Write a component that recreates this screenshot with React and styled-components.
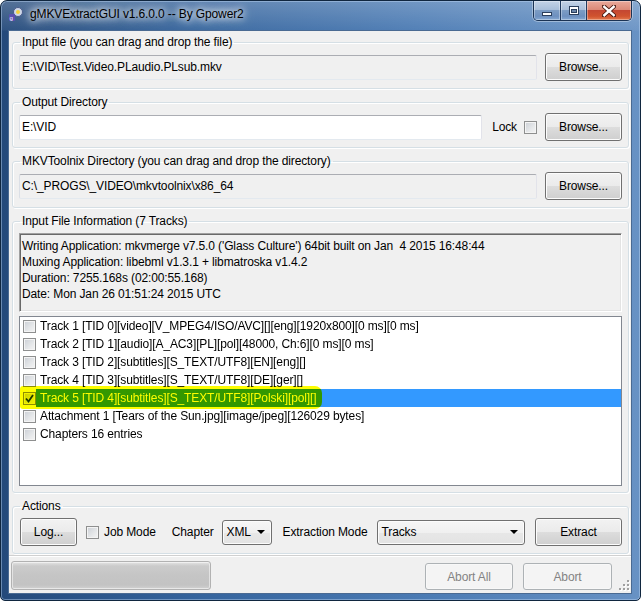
import React from "react";
import styled, { createGlobalStyle, css } from "styled-components";

const GlobalStyle = createGlobalStyle`
  html, body { margin: 0; padding: 0; background: #ffffff; }
  body { font-family: "Liberation Sans", Arial, sans-serif; font-size: 12px; color: #000; letter-spacing: -0.12px; }
  * { box-sizing: border-box; }
`;

const Window = styled.div`
  width: 641px;
  height: 601px;
  display: flex;
  flex-direction: column;
  border: 1px solid #10263f;
  border-radius: 7px 7px 5px 5px;
  padding: 0 8px 6px 7px;
  overflow: hidden;
  background:
    linear-gradient(180deg, rgba(255,255,255,0.22) 0px, rgba(255,255,255,0.05) 29px, rgba(255,255,255,0) 30px),
    linear-gradient(90deg, #24497a 0%, #34639c 30%, #4a7ab3 65%, #6892c4 100%);
  box-shadow: inset 0 0 0 1px rgba(190, 215, 245, 0.45);
`;

const TitleBar = styled.div`
  height: 29px;
  display: flex;
  align-items: flex-start;
  flex-shrink: 0;
`;

const AppIcon = styled.svg`
  width: 16px;
  height: 16px;
  margin-top: 5px;
  flex-shrink: 0;
`;

const Title = styled.div`
  margin: 5px 0 0 6px;
  line-height: 16px;
  font-size: 12px;
  color: #000;
  text-shadow: 0 0 6px #fff, 0 0 10px rgba(255,255,255,0.9), 0 0 14px rgba(255,255,255,0.7);
  white-space: nowrap;
`;

const CaptionGroup = styled.div`
  margin-left: auto;
  display: flex;
  height: 20px;
  border: 1px solid #1b3354;
  border-top: none;
  border-radius: 0 0 5px 5px;
  overflow: hidden;
  box-shadow: 0 0 0 1px rgba(255,255,255,0.35);
`;

const CaptionButton = styled.div`
  width: ${(p) => (p.$close ? 45 : 26)}px;
  height: 19px;
  display: flex;
  align-items: center;
  justify-content: center;
  border-left: ${(p) => (p.$first ? "none" : "1px solid #203a5e")};
  box-shadow: inset 0 0 0 1px rgba(255,255,255,0.35);
  ${(p) =>
    p.$close
      ? css`
          background: linear-gradient(180deg, #e9a99b 0%, #dc8a78 45%, #c44732 50%, #d0532f 80%, #e37a4f 100%);
        `
      : css`
          background: linear-gradient(180deg, #c3d3e7 0%, #a9bfda 45%, #7c9cc4 50%, #6d90bf 80%, #86a9d3 100%);
        `}
`;

const Client = styled.div`
  flex: 1;
  display: flex;
  flex-direction: column;
  background: #f0f0f0;
  border: 1px solid #4a6a92;
`;

const Content = styled.div`
  flex: 1;
  display: flex;
  flex-direction: column;
  gap: 6px;
  padding: 4px 2px 0 3px;
`;

const Group = styled.fieldset`
  margin: 0;
  min-width: 0;
  border: 1px solid #d5dfe5;
  border-radius: 3px;
  padding: ${(p) => p.$pt || 3}px 6px ${(p) => p.$pb || 7}px 6px;
  box-shadow: inset 1px 1px 0 #fff, 1px 1px 0 #fff;
  display: flex;
  flex-direction: column;
  gap: 4px;
`;

const Legend = styled.legend`
  padding: 0 2px;
  margin-left: 1px;
  line-height: 15px;
  font-size: 12px;
  color: #000;
`;

const Row = styled.div`
  display: flex;
  align-items: center;
  height: 28px;
`;

const TextBox = styled.div`
  flex: 1;
  height: 25px;
  display: flex;
  align-items: center;
  padding-left: 2px;
  white-space: nowrap;
  overflow: hidden;
  background: ${(p) => (p.$readOnly ? "#f0f0f0" : "#ffffff")};
  border: 1px solid;
  border-color: #abadb3 #e2e3ea #e3e9ef #dbdfe6;
  border-radius: 2px;
  margin-right: ${(p) => p.$mr || 8}px;
`;

const Button = styled.div`
  width: ${(p) => p.$w}px;
  height: ${(p) => p.$h || 28}px;
  margin-left: ${(p) => p.$ml || 0}px;
  flex-shrink: 0;
  display: flex;
  align-items: center;
  justify-content: center;
  border: 1px solid ${(p) => (p.$disabled ? "#adb2b5" : "#707070")};
  border-radius: 3px;
  color: ${(p) => (p.$disabled ? "#838383" : "#000")};
  background: ${(p) =>
    p.$disabled
      ? "#f4f4f4"
      : "linear-gradient(180deg, #f2f2f2 0%, #ebebeb 49%, #dddddd 50%, #cfcfcf 100%)"};
  box-shadow: inset 0 0 0 1px ${(p) => (p.$disabled ? "#f8f8f8" : "#fcfcfc")};
`;

const CheckBox = styled.div`
  width: 13px;
  height: 13px;
  flex-shrink: 0;
  margin-left: ${(p) => p.$ml || 0}px;
  border: 1px solid #8e8f8f;
  background: linear-gradient(135deg, #cbcfd5 0%, #e6e8ea 60%, #f4f4f4 100%);
  box-shadow: inset 0 0 0 1px #f4f4f4;
  display: flex;
  align-items: center;
  justify-content: center;
`;

const Label = styled.span`
  margin-left: ${(p) => p.$ml || 0}px;
  white-space: nowrap;
  flex-shrink: 0;
`;

const Select = styled.div`
  width: ${(p) => (p.$w ? `${p.$w}px` : "auto")};
  flex: ${(p) => (p.$grow ? 1 : "none")};
  height: 25px;
  margin-left: ${(p) => p.$ml || 0}px;
  display: flex;
  align-items: center;
  justify-content: space-between;
  padding: 0 6px 0 4px;
  border: 1px solid #707070;
  border-radius: 3px;
  background: linear-gradient(180deg, #f6f6f6 0%, #f0f0f0 50%, #e7e7e7 51%, #e3e3e3 100%);
  box-shadow: inset 0 0 0 1px #fcfcfc;
`;

const Arrow = styled.span`
  width: 0;
  height: 0;
  border-left: 4px solid transparent;
  border-right: 4px solid transparent;
  border-top: 4px solid #000;
`;

const InfoBox = styled.div`
  height: 79px;
  padding: 4px 2px;
  line-height: 16px;
  background: #f0f0f0;
  border: 1px solid;
  border-color: #a0a0a0 #ffffff #ffffff #a0a0a0;
  box-shadow: inset 1px 1px 0 #696969, inset -1px -1px 0 #e3e3e3;
  white-space: nowrap;
  overflow: hidden;
`;

const TrackList = styled.div`
  position: relative;
  height: 170px;
  background: #fff;
  border: 1px solid #828790;
  isolation: isolate;
`;

const TrackRow = styled.div`
  display: flex;
  align-items: center;
  height: 18px;
  padding-left: 3px;
`;

const TrackText = styled.div`
  flex: 1;
  height: 18px;
  line-height: 18px;
  padding-left: 4px;
  white-space: nowrap;
  background: ${(p) => (p.$selected ? "#3399ff" : "transparent")};
  color: ${(p) => (p.$selected ? "#fff" : "#000")};
`;

const Highlighter = styled.div`
  position: absolute;
  left: 0;
  top: 69px;
  width: 302px;
  height: 23px;
  background: #fdfd00;
  border-radius: 3px 7px 7px 3px;
  mix-blend-mode: multiply;
  pointer-events: none;
`;

const StatusStrip = styled.div`
  position: relative;
  height: 38px;
  flex-shrink: 0;
  display: flex;
  align-items: flex-end;
  padding: 0 0 3px 2px;
  border-top: 1px solid #d0d0d0;
  box-shadow: inset 0 1px 0 #fff;
`;

const Progress = styled.div`
  width: 200px;
  height: 29px;
  border: 1px solid #b2b2b2;
  border-radius: 3px;
  background: linear-gradient(180deg, #e4e4e4 0%, #cbcbcb 15%, #c5c5c5 50%, #c3c3c3 85%, #d2d2d2 100%);
  box-shadow: inset 0 0 0 1px rgba(255,255,255,0.5);
`;

const StatusButtons = styled.div`
  margin-left: auto;
  margin-right: 19px;
  display: flex;
  gap: 10px;
`;

const Grip = styled.svg`
  position: absolute;
  right: 1px;
  bottom: 2px;
`;

const tracks = [
  "Track 1 [TID 0][video][V_MPEG4/ISO/AVC][][eng][1920x800][0 ms][0 ms]",
  "Track 2 [TID 1][audio][A_AC3][PL][pol][48000, Ch:6][0 ms][0 ms]",
  "Track 3 [TID 2][subtitles][S_TEXT/UTF8][EN][eng][]",
  "Track 4 [TID 3][subtitles][S_TEXT/UTF8][DE][ger][]",
  "Track 5 [TID 4][subtitles][S_TEXT/UTF8][Polski][pol][]",
  "Attachment 1 [Tears of the Sun.jpg][image/jpeg][126029 bytes]",
  "Chapters 16 entries",
];

const Check = () => (
  <svg width="9" height="9" viewBox="0 0 9 9">
    <path d="M1 4.5 L3.5 7.5 L8 1" fill="none" stroke="#1c3a5a" strokeWidth="1.8" />
  </svg>
);

export default function App() {
  return (
    <>
      <GlobalStyle />
      <Window>
        <TitleBar>
          <AppIcon viewBox="0 0 16 16">
            <circle cx="10" cy="6" r="4.5" fill="#cfd8e8" stroke="#4a5a8a" strokeWidth="1" />
            <circle cx="10" cy="6" r="2" fill="#f2d23a" />
            <rect x="1" y="8" width="6" height="7" rx="1" fill="#5a4fb0" />
            <text x="1.5" y="14" fontSize="6" fill="#fff" fontFamily="Liberation Sans">g</text>
          </AppIcon>
          <Title>gMKVExtractGUI v1.6.0.0 -- By Gpower2</Title>
          <CaptionGroup>
            <CaptionButton $first>
              <svg width="12" height="12" viewBox="0 0 12 12">
                <rect x="1.5" y="7.5" width="9" height="3" fill="#fff" stroke="#2b3f5c" />
              </svg>
            </CaptionButton>
            <CaptionButton>
              <svg width="12" height="12" viewBox="0 0 12 12">
                <rect x="1.5" y="1.5" width="9" height="8" fill="#fff" stroke="#2b3f5c" />
                <rect x="3.5" y="4.5" width="5" height="3" fill="#6b85a8" stroke="#2b3f5c" />
              </svg>
            </CaptionButton>
            <CaptionButton $close>
              <svg width="14" height="12" viewBox="0 0 14 12">
                <path d="M2 1.5 L12 10.5 M12 1.5 L2 10.5" stroke="#4a1a12" strokeWidth="4.2" strokeLinecap="square" />
                <path d="M2.3 1.8 L11.7 10.2 M11.7 1.8 L2.3 10.2" stroke="#fff" strokeWidth="2.4" strokeLinecap="square" />
              </svg>
            </CaptionButton>
          </CaptionGroup>
        </TitleBar>
        <Client>
          <Content>
            <Group>
              <Legend>Input file (you can drag and drop the file)</Legend>
              <Row>
                <TextBox $readOnly>E:\VID\Test.Video.PLaudio.PLsub.mkv</TextBox>
                <Button $w={77}>Browse...</Button>
              </Row>
            </Group>
            <Group $pb={6}>
              <Legend>Output Directory</Legend>
              <Row>
                <TextBox $mr={10}>E:\VID</TextBox>
                <Label>Lock</Label>
                <CheckBox $ml={7} />
                <Button $w={77} $ml={8}>Browse...</Button>
              </Row>
            </Group>
            <Group>
              <Legend>MKVToolnix Directory (you can drag and drop the directory)</Legend>
              <Row>
                <TextBox $readOnly>C:\_PROGS\_VIDEO\mkvtoolnix\x86_64</TextBox>
                <Button $w={77}>Browse...</Button>
              </Row>
            </Group>
            <Group $pt={4} $pb={6}>
              <Legend>Input File Information (7 Tracks)</Legend>
              <InfoBox>
                <div>Writing Application: mkvmerge v7.5.0 ('Glass Culture') 64bit built on Jan&nbsp; 4 2015 16:48:44</div>
                <div>Muxing Application: libebml v1.3.1 + libmatroska v1.4.2</div>
                <div>Duration: 7255.168s (02:00:55.168)</div>
                <div>Date: Mon Jan 26 01:51:24 2015 UTC</div>
              </InfoBox>
              <TrackList>
                {tracks.map((t, i) => (
                  <TrackRow key={t}>
                    <CheckBox>{i === 4 && <Check />}</CheckBox>
                    <TrackText $selected={i === 4}>{t}</TrackText>
                  </TrackRow>
                ))}
                <Highlighter />
              </TrackList>
            </Group>
            <Group $pt={4}>
              <Legend>Actions</Legend>
              <Row>
                <Button $w={57} $ml={1}>Log...</Button>
                <CheckBox $ml={9} />
                <Label $ml={5}>Job Mode</Label>
                <Label $ml={16}>Chapter</Label>
                <Select $w={50} $ml={8}>
                  <span>XML</span>
                  <Arrow />
                </Select>
                <Label $ml={11}>Extraction Mode</Label>
                <Select $grow $ml={9}>
                  <span>Tracks</span>
                  <Arrow />
                </Select>
                <Button $w={87} $ml={10}>Extract</Button>
              </Row>
            </Group>
          </Content>
          <StatusStrip>
            <Progress />
            <StatusButtons>
              <Button $w={88} $h={27} $disabled>Abort All</Button>
              <Button $w={89} $h={27} $disabled>Abort</Button>
            </StatusButtons>
            <Grip width="12" height="12" viewBox="0 0 12 12">
              {[[9, 1], [9, 5], [5, 5], [9, 9], [5, 9], [1, 9]].map(([x, y]) => (
                <g key={`${x}-${y}`}>
                  <rect x={x + 1} y={y + 1} width="2" height="2" fill="#fff" />
                  <rect x={x} y={y} width="2" height="2" fill="#a0a0a0" />
                </g>
              ))}
            </Grip>
          </StatusStrip>
        </Client>
      </Window>
    </>
  );
}
